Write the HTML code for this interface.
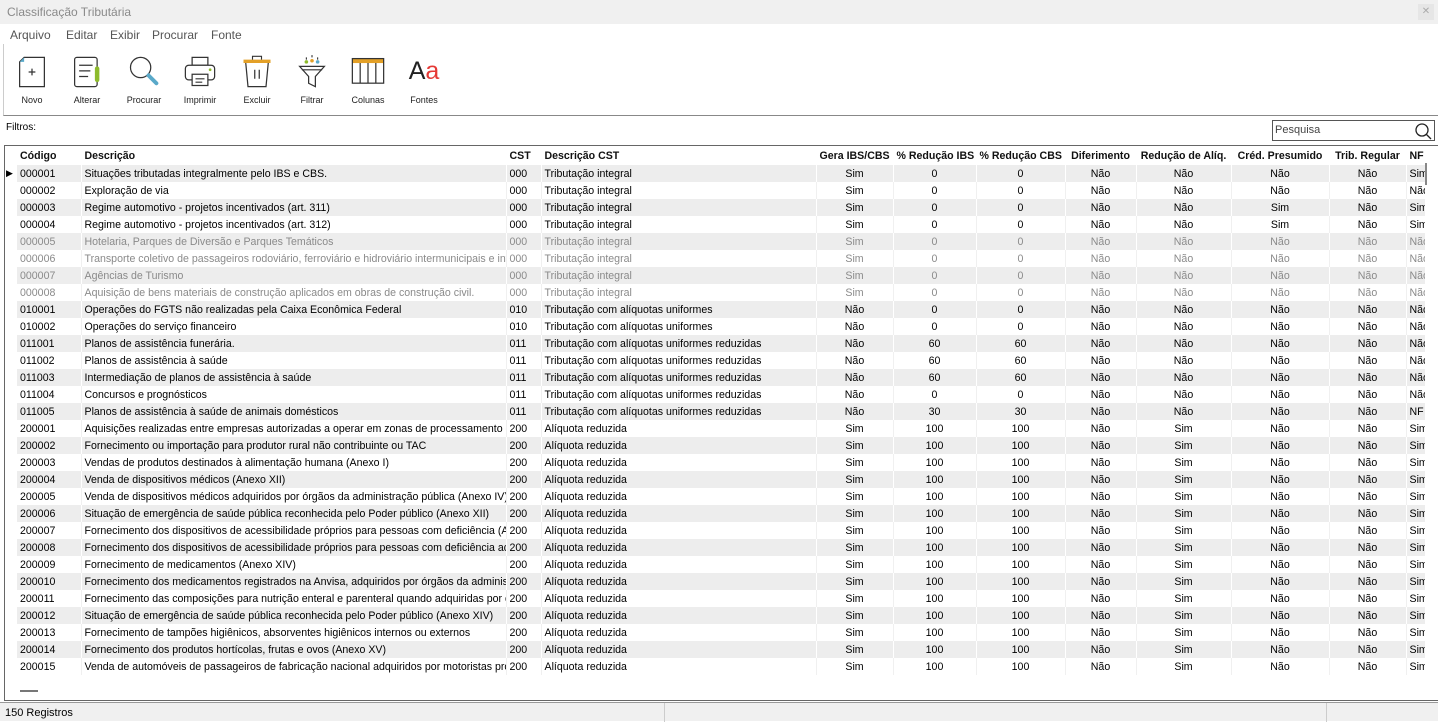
<!DOCTYPE html>
<html><head><meta charset="utf-8"><style>
*{margin:0;padding:0;box-sizing:border-box}
body{width:1438px;height:721px;background:#fff;font-family:"Liberation Sans",Arial,sans-serif;position:relative;overflow:hidden;color:#000}
.title{position:absolute;left:0;top:0;width:1438px;height:24px;background:#f0f0f0;color:#8a8a8a;font-size:12px;padding:5px 7px}
.close{position:absolute;right:4px;top:4px;width:16px;height:16px;background:#e6e6e6;color:#aaa;font-size:10px;text-align:center;line-height:16px}
.menu{position:absolute;left:0;top:24px;width:1438px;height:20px;font-size:12px;color:#555}
.menu span{position:absolute;top:4px}
.tb{position:absolute;left:3px;top:44px;width:1435px;height:72px;border-bottom:1px solid #888;border-left:1px solid #ccc}
.btn{position:absolute;top:10px;width:56px;text-align:center;font-size:9px;color:#222}
.btn svg{display:block;margin:0 auto 5px}
.filt{position:absolute;left:6px;top:122px;font-size:10px}
.search{position:absolute;left:1272px;top:120px;width:163px;height:21px;border:1px solid #555;font-size:11px;color:#444;padding:3px 2px}
.grid{position:absolute;left:4px;top:145px;width:1434px;height:556px;border:1px solid #666;border-right:none;overflow:hidden}
table{border-collapse:collapse;table-layout:fixed;width:1431px;font-size:10.6px;position:absolute;left:0;top:1px}
td,th{white-space:nowrap;overflow:hidden;height:17px;padding:0 3px;border-right:1px solid #fff;text-align:left}
th{font-weight:bold;height:18px;color:#111}
tr.g td{background:#ededed}
tr.w td{border-right-color:#f0f0f0}
tr.d td{color:#8a8a8a}
td.c,th.c{text-align:center}
td.a,th.a{background:#fff!important;border-right:none;padding:0}
.sb{position:absolute;left:1420px;top:15px;width:13px;height:524px;background:#fff}
.thumb{position:absolute;left:1425px;top:163px;width:2px;height:22px;background:#888}
.hs{position:absolute;left:20px;top:690px;width:18px;height:2px;background:#777}
.status{position:absolute;left:0;top:702px;width:1438px;height:19px;background:#f0f0f0;border-top:1px solid #999;font-size:11px;padding:4px 5px}
.status i{position:absolute;top:0;width:1px;height:19px;background:#ccc}
</style></head><body>
<div class="title">Classificação Tributária<div class="close">✕</div></div>
<div class="menu"><span style="left:10px">Arquivo</span><span style="left:66px">Editar</span><span style="left:110px">Exibir</span><span style="left:152px">Procurar</span><span style="left:211px">Fonte</span></div>
<div class="tb">
<div class="btn" style="left:0"><svg width="36" height="36" viewBox="0 0 30 32"><path d="M8 3h18v26H4V7z" fill="#fff" stroke="#333" stroke-width="1.1"/><path d="M4 7l4-4v4z" fill="#5aa9c9"/><path d="M15 13v6M12 16h6" stroke="#333" stroke-width="1.1"/></svg>Novo</div>
<div class="btn" style="left:55px"><svg width="36" height="36" viewBox="0 0 30 32"><rect x="4" y="3" width="20" height="26" rx="2" fill="#fff" stroke="#333" stroke-width="1.1"/><path d="M8 10h12M8 15h10M8 20h8" stroke="#333" stroke-width="1.1"/><rect x="22" y="11" width="4" height="14" rx="2" fill="#8dbb2c"/></svg>Alterar</div>
<div class="btn" style="left:112px"><svg width="36" height="36" viewBox="0 0 32 32"><circle cx="13" cy="12" r="9" fill="none" stroke="#333" stroke-width="1.1"/><path d="M20 19l7 7" stroke="#5aa9c9" stroke-width="3.5" stroke-linecap="round"/></svg>Procurar</div>
<div class="btn" style="left:168px"><svg width="36" height="36" viewBox="0 0 32 32"><rect x="9" y="3" width="14" height="7" fill="#fff" stroke="#333" stroke-width="1.1"/><rect x="3" y="10" width="26" height="13" rx="3" fill="#fff" stroke="#333" stroke-width="1.1"/><rect x="9" y="18" width="14" height="10" fill="#fff" stroke="#333" stroke-width="1.1"/><path d="M12 22h8M12 25h6" stroke="#333"/><circle cx="25" cy="14" r="1.2" fill="#8dbb2c"/></svg>Imprimir</div>
<div class="btn" style="left:225px"><svg width="36" height="36" viewBox="0 0 30 32"><rect x="3" y="5" width="24" height="3" fill="#e3a027"/><path d="M11 5V2h8v3" fill="none" stroke="#333"/><path d="M5 8l2 21h16l2-21" fill="#fff" stroke="#333" stroke-width="1.1"/><path d="M13 14v8M17 14v8" stroke="#333" stroke-width="1.1"/></svg>Excluir</div>
<div class="btn" style="left:280px"><svg width="36" height="36" viewBox="0 0 30 32"><circle cx="10" cy="7" r="1.6" fill="#8dbb2c"/><circle cx="15" cy="6" r="1.6" fill="#e3a027"/><circle cx="20" cy="7" r="1.6" fill="#5aa9c9"/><path d="M15 1v2M10 3v2M20 3v2" stroke="#333"/><path d="M4 11h22l-8 9v9l-6-3v-6z" fill="#fff" stroke="#333" stroke-width="1.1"/><path d="M6 14h18" stroke="#333"/></svg>Filtrar</div>
<div class="btn" style="left:336px"><svg width="38" height="36" viewBox="0 0 34 32"><rect x="3" y="4" width="28" height="4" fill="#e3a027"/><rect x="3" y="4" width="28" height="22" fill="none" stroke="#333" stroke-width="1.1"/><path d="M10 8v18M17 8v18M24 8v18" stroke="#333" stroke-width="1.1"/></svg>Colunas</div>
<div class="btn" style="left:392px"><div style="font-size:25px;height:36px;line-height:34px;margin-bottom:5px;color:#222">A<span style="color:#e53935">a</span></div>Fontes</div>
</div>
<div class="filt">Filtros:</div>
<div class="search">Pesquisa<svg style="position:absolute;right:2px;top:1px" width="18" height="18" viewBox="0 0 18 18"><circle cx="8" cy="8" r="6" fill="none" stroke="#222" stroke-width="1.3"/><path d="M12 12l5 5" stroke="#222" stroke-width="1.3"/></svg></div>
<div class="grid">
<table>
<colgroup><col style="width:12px"><col style="width:64px"><col style="width:425px"><col style="width:35px"><col style="width:275px"><col style="width:77px"><col style="width:83px"><col style="width:89px"><col style="width:71px"><col style="width:95px"><col style="width:98px"><col style="width:77px"><col style="width:30px"></colgroup>
<tr><th class="a"></th><th>Código</th><th>Descrição</th><th>CST</th><th>Descrição CST</th><th class="c">Gera IBS/CBS</th><th class="c">% Redução IBS</th><th class="c">% Redução CBS</th><th class="c">Diferimento</th><th class="c">Redução de Alíq.</th><th class="c">Créd. Presumido</th><th class="c">Trib. Regular</th><th>NF</th></tr>
<tr class="g"><td class="a" style="font-size:9px;padding:0 0 0 1px">▶</td><td>000001</td><td>Situações tributadas integralmente pelo IBS e CBS.</td><td>000</td><td>Tributação integral</td><td class="c">Sim</td><td class="c">0</td><td class="c">0</td><td class="c">Não</td><td class="c">Não</td><td class="c">Não</td><td class="c">Não</td><td>Sim</td></tr>
<tr class="w"><td class="a"></td><td>000002</td><td>Exploração de via</td><td>000</td><td>Tributação integral</td><td class="c">Sim</td><td class="c">0</td><td class="c">0</td><td class="c">Não</td><td class="c">Não</td><td class="c">Não</td><td class="c">Não</td><td>Não</td></tr>
<tr class="g"><td class="a"></td><td>000003</td><td>Regime automotivo - projetos incentivados (art. 311)</td><td>000</td><td>Tributação integral</td><td class="c">Sim</td><td class="c">0</td><td class="c">0</td><td class="c">Não</td><td class="c">Não</td><td class="c">Sim</td><td class="c">Não</td><td>Sim</td></tr>
<tr class="w"><td class="a"></td><td>000004</td><td>Regime automotivo - projetos incentivados (art. 312)</td><td>000</td><td>Tributação integral</td><td class="c">Sim</td><td class="c">0</td><td class="c">0</td><td class="c">Não</td><td class="c">Não</td><td class="c">Sim</td><td class="c">Não</td><td>Sim</td></tr>
<tr class="g d"><td class="a"></td><td>000005</td><td>Hotelaria, Parques de Diversão e Parques Temáticos</td><td>000</td><td>Tributação integral</td><td class="c">Sim</td><td class="c">0</td><td class="c">0</td><td class="c">Não</td><td class="c">Não</td><td class="c">Não</td><td class="c">Não</td><td>Não</td></tr>
<tr class="w d"><td class="a"></td><td>000006</td><td>Transporte coletivo de passageiros rodoviário, ferroviário e hidroviário intermunicipais e interestaduais</td><td>000</td><td>Tributação integral</td><td class="c">Sim</td><td class="c">0</td><td class="c">0</td><td class="c">Não</td><td class="c">Não</td><td class="c">Não</td><td class="c">Não</td><td>Não</td></tr>
<tr class="g d"><td class="a"></td><td>000007</td><td>Agências de Turismo</td><td>000</td><td>Tributação integral</td><td class="c">Sim</td><td class="c">0</td><td class="c">0</td><td class="c">Não</td><td class="c">Não</td><td class="c">Não</td><td class="c">Não</td><td>Não</td></tr>
<tr class="w d"><td class="a"></td><td>000008</td><td>Aquisição de bens materiais de construção aplicados em obras de construção civil.</td><td>000</td><td>Tributação integral</td><td class="c">Sim</td><td class="c">0</td><td class="c">0</td><td class="c">Não</td><td class="c">Não</td><td class="c">Não</td><td class="c">Não</td><td>Não</td></tr>
<tr class="g"><td class="a"></td><td>010001</td><td>Operações do FGTS não realizadas pela Caixa Econômica Federal</td><td>010</td><td>Tributação com alíquotas uniformes</td><td class="c">Não</td><td class="c">0</td><td class="c">0</td><td class="c">Não</td><td class="c">Não</td><td class="c">Não</td><td class="c">Não</td><td>Não</td></tr>
<tr class="w"><td class="a"></td><td>010002</td><td>Operações do serviço financeiro</td><td>010</td><td>Tributação com alíquotas uniformes</td><td class="c">Não</td><td class="c">0</td><td class="c">0</td><td class="c">Não</td><td class="c">Não</td><td class="c">Não</td><td class="c">Não</td><td>Não</td></tr>
<tr class="g"><td class="a"></td><td>011001</td><td>Planos de assistência funerária.</td><td>011</td><td>Tributação com alíquotas uniformes reduzidas</td><td class="c">Não</td><td class="c">60</td><td class="c">60</td><td class="c">Não</td><td class="c">Não</td><td class="c">Não</td><td class="c">Não</td><td>Não</td></tr>
<tr class="w"><td class="a"></td><td>011002</td><td>Planos de assistência à saúde</td><td>011</td><td>Tributação com alíquotas uniformes reduzidas</td><td class="c">Não</td><td class="c">60</td><td class="c">60</td><td class="c">Não</td><td class="c">Não</td><td class="c">Não</td><td class="c">Não</td><td>Não</td></tr>
<tr class="g"><td class="a"></td><td>011003</td><td>Intermediação de planos de assistência à saúde</td><td>011</td><td>Tributação com alíquotas uniformes reduzidas</td><td class="c">Não</td><td class="c">60</td><td class="c">60</td><td class="c">Não</td><td class="c">Não</td><td class="c">Não</td><td class="c">Não</td><td>Não</td></tr>
<tr class="w"><td class="a"></td><td>011004</td><td>Concursos e prognósticos</td><td>011</td><td>Tributação com alíquotas uniformes reduzidas</td><td class="c">Não</td><td class="c">0</td><td class="c">0</td><td class="c">Não</td><td class="c">Não</td><td class="c">Não</td><td class="c">Não</td><td>Não</td></tr>
<tr class="g"><td class="a"></td><td>011005</td><td>Planos de assistência à saúde de animais domésticos</td><td>011</td><td>Tributação com alíquotas uniformes reduzidas</td><td class="c">Não</td><td class="c">30</td><td class="c">30</td><td class="c">Não</td><td class="c">Não</td><td class="c">Não</td><td class="c">Não</td><td>NF</td></tr>
<tr class="w"><td class="a"></td><td>200001</td><td>Aquisições realizadas entre empresas autorizadas a operar em zonas de processamento de exportação</td><td>200</td><td>Alíquota reduzida</td><td class="c">Sim</td><td class="c">100</td><td class="c">100</td><td class="c">Não</td><td class="c">Sim</td><td class="c">Não</td><td class="c">Não</td><td>Sim</td></tr>
<tr class="g"><td class="a"></td><td>200002</td><td>Fornecimento ou importação para produtor rural não contribuinte ou TAC</td><td>200</td><td>Alíquota reduzida</td><td class="c">Sim</td><td class="c">100</td><td class="c">100</td><td class="c">Não</td><td class="c">Sim</td><td class="c">Não</td><td class="c">Não</td><td>Sim</td></tr>
<tr class="w"><td class="a"></td><td>200003</td><td>Vendas de produtos destinados à alimentação humana (Anexo I)</td><td>200</td><td>Alíquota reduzida</td><td class="c">Sim</td><td class="c">100</td><td class="c">100</td><td class="c">Não</td><td class="c">Sim</td><td class="c">Não</td><td class="c">Não</td><td>Sim</td></tr>
<tr class="g"><td class="a"></td><td>200004</td><td>Venda de dispositivos médicos (Anexo XII)</td><td>200</td><td>Alíquota reduzida</td><td class="c">Sim</td><td class="c">100</td><td class="c">100</td><td class="c">Não</td><td class="c">Sim</td><td class="c">Não</td><td class="c">Não</td><td>Sim</td></tr>
<tr class="w"><td class="a"></td><td>200005</td><td>Venda de dispositivos médicos adquiridos por órgãos da administração pública (Anexo IV)</td><td>200</td><td>Alíquota reduzida</td><td class="c">Sim</td><td class="c">100</td><td class="c">100</td><td class="c">Não</td><td class="c">Sim</td><td class="c">Não</td><td class="c">Não</td><td>Sim</td></tr>
<tr class="g"><td class="a"></td><td>200006</td><td>Situação de emergência de saúde pública reconhecida pelo Poder público (Anexo XII)</td><td>200</td><td>Alíquota reduzida</td><td class="c">Sim</td><td class="c">100</td><td class="c">100</td><td class="c">Não</td><td class="c">Sim</td><td class="c">Não</td><td class="c">Não</td><td>Sim</td></tr>
<tr class="w"><td class="a"></td><td>200007</td><td>Fornecimento dos dispositivos de acessibilidade próprios para pessoas com deficiência (Anexo XIII)</td><td>200</td><td>Alíquota reduzida</td><td class="c">Sim</td><td class="c">100</td><td class="c">100</td><td class="c">Não</td><td class="c">Sim</td><td class="c">Não</td><td class="c">Não</td><td>Sim</td></tr>
<tr class="g"><td class="a"></td><td>200008</td><td>Fornecimento dos dispositivos de acessibilidade próprios para pessoas com deficiência adquiridos</td><td>200</td><td>Alíquota reduzida</td><td class="c">Sim</td><td class="c">100</td><td class="c">100</td><td class="c">Não</td><td class="c">Sim</td><td class="c">Não</td><td class="c">Não</td><td>Sim</td></tr>
<tr class="w"><td class="a"></td><td>200009</td><td>Fornecimento de medicamentos (Anexo XIV)</td><td>200</td><td>Alíquota reduzida</td><td class="c">Sim</td><td class="c">100</td><td class="c">100</td><td class="c">Não</td><td class="c">Sim</td><td class="c">Não</td><td class="c">Não</td><td>Sim</td></tr>
<tr class="g"><td class="a"></td><td>200010</td><td>Fornecimento dos medicamentos registrados na Anvisa, adquiridos por órgãos da administração pública</td><td>200</td><td>Alíquota reduzida</td><td class="c">Sim</td><td class="c">100</td><td class="c">100</td><td class="c">Não</td><td class="c">Sim</td><td class="c">Não</td><td class="c">Não</td><td>Sim</td></tr>
<tr class="w"><td class="a"></td><td>200011</td><td>Fornecimento das composições para nutrição enteral e parenteral quando adquiridas por órgãos</td><td>200</td><td>Alíquota reduzida</td><td class="c">Sim</td><td class="c">100</td><td class="c">100</td><td class="c">Não</td><td class="c">Sim</td><td class="c">Não</td><td class="c">Não</td><td>Sim</td></tr>
<tr class="g"><td class="a"></td><td>200012</td><td>Situação de emergência de saúde pública reconhecida pelo Poder público (Anexo XIV)</td><td>200</td><td>Alíquota reduzida</td><td class="c">Sim</td><td class="c">100</td><td class="c">100</td><td class="c">Não</td><td class="c">Sim</td><td class="c">Não</td><td class="c">Não</td><td>Sim</td></tr>
<tr class="w"><td class="a"></td><td>200013</td><td>Fornecimento de tampões higiênicos, absorventes higiênicos internos ou externos</td><td>200</td><td>Alíquota reduzida</td><td class="c">Sim</td><td class="c">100</td><td class="c">100</td><td class="c">Não</td><td class="c">Sim</td><td class="c">Não</td><td class="c">Não</td><td>Sim</td></tr>
<tr class="g"><td class="a"></td><td>200014</td><td>Fornecimento dos produtos hortícolas, frutas e ovos (Anexo XV)</td><td>200</td><td>Alíquota reduzida</td><td class="c">Sim</td><td class="c">100</td><td class="c">100</td><td class="c">Não</td><td class="c">Sim</td><td class="c">Não</td><td class="c">Não</td><td>Sim</td></tr>
<tr class="w"><td class="a"></td><td>200015</td><td>Venda de automóveis de passageiros de fabricação nacional adquiridos por motoristas profissionais</td><td>200</td><td>Alíquota reduzida</td><td class="c">Sim</td><td class="c">100</td><td class="c">100</td><td class="c">Não</td><td class="c">Sim</td><td class="c">Não</td><td class="c">Não</td><td>Sim</td></tr>
</table>
<div class="sb"></div>
</div>
<div class="thumb"></div>
<div class="hs"></div>
<div class="status">150 Registros<i style="left:664px"></i><i style="left:1326px"></i></div>
</body></html>
